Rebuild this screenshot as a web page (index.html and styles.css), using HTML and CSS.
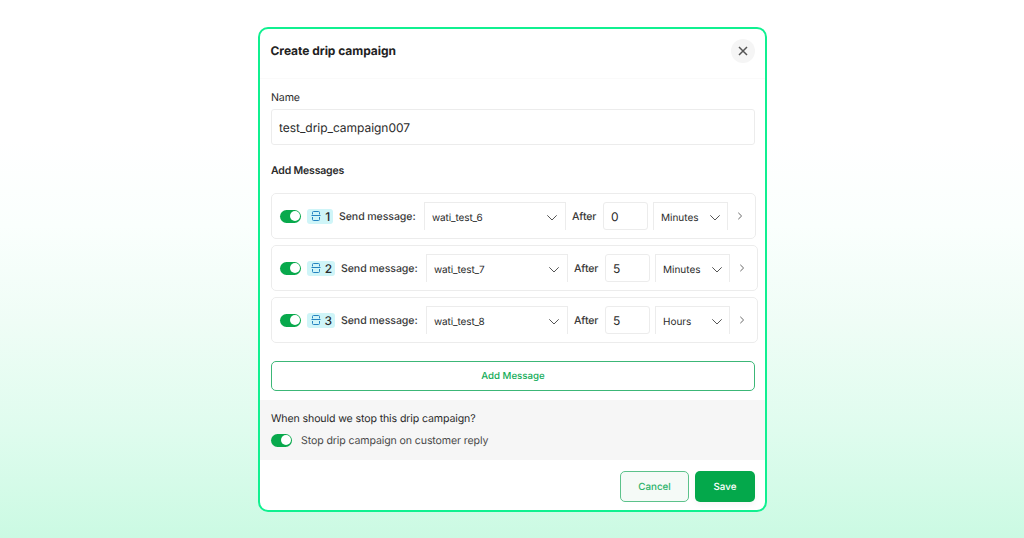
FILE: index.html
```html
<!DOCTYPE html>
<html lang="en">
<head>
  <meta charset="UTF-8">
  <title>Create drip campaign</title>
  <link rel="stylesheet" href="styles.css">
</head>
<body>
  <svg width="0" height="0" class="sprite">
    <symbol id="icon-split" viewBox="0 0 10 10">
      <path d="M1.5 3.4V1.5Q1.5 .5 2.5 .5H7.5Q8.5 .5 8.5 1.5V3.4M.5 4.5H9.5M1.5 6V8.5Q1.5 9.5 2.5 9.5H7.5Q8.5 9.5 8.5 8.5V6" />
    </symbol>
    <symbol id="icon-down" viewBox="0 0 12 8">
      <path d="M1.3 1.3L6 6L10.7 1.3" />
    </symbol>
    <symbol id="icon-next" viewBox="0 0 6 8">
      <path d="M1.3 .8L4.6 4L1.3 7.2" />
    </symbol>
  </svg>

  <div class="modal">
    <div class="modal-header">
      <h2>Create drip campaign</h2>
      <button class="close-btn" aria-label="Close">
        <svg width="10" height="10" viewBox="0 0 10 10"><path d="M1 1L9 9M9 1L1 9" /></svg>
      </button>
    </div>

    <div class="modal-body">
      <label class="name-label" for="campaign-name">Name</label>
      <input class="name-input" id="campaign-name" type="text" value="test_drip_campaign007">

      <h3>Add Messages</h3>
      <div class="messages">
        <div class="message first">
          <span class="switch"></span>
          <span class="badge"><svg><use href="#icon-split" /></svg>1</span>
          <span class="send-label">Send message:</span>
          <div class="select template">wati_test_6<svg><use href="#icon-down" /></svg></div>
          <span class="after-label">After</span>
          <input class="delay" type="text" value="0">
          <div class="select unit">Minutes<svg><use href="#icon-down" /></svg></div>
          <svg class="next"><use href="#icon-next" /></svg>
        </div>
        <div class="message">
          <span class="switch"></span>
          <span class="badge"><svg><use href="#icon-split" /></svg>2</span>
          <span class="send-label">Send message:</span>
          <div class="select template">wati_test_7<svg><use href="#icon-down" /></svg></div>
          <span class="after-label">After</span>
          <input class="delay" type="text" value="5">
          <div class="select unit">Minutes<svg><use href="#icon-down" /></svg></div>
          <svg class="next"><use href="#icon-next" /></svg>
        </div>
        <div class="message">
          <span class="switch"></span>
          <span class="badge"><svg><use href="#icon-split" /></svg>3</span>
          <span class="send-label">Send message:</span>
          <div class="select template">wati_test_8<svg><use href="#icon-down" /></svg></div>
          <span class="after-label">After</span>
          <input class="delay" type="text" value="5">
          <div class="select unit">Hours<svg><use href="#icon-down" /></svg></div>
          <svg class="next"><use href="#icon-next" /></svg>
        </div>
      </div>
      <button class="add-btn">Add Message</button>
    </div>

    <div class="stop-section">
      <p>When should we stop this drip campaign?</p>
      <div class="stop-row">
        <span class="switch"></span>
        <span>Stop drip campaign on customer reply</span>
      </div>
    </div>

    <div class="modal-footer">
      <button class="btn cancel">Cancel</button>
      <button class="btn save">Save</button>
    </div>
  </div>
</body>
</html>
```
FILE: styles.css
```css
* {
  box-sizing: border-box;
}
body {
  margin: 0;
  height: 538px;
  padding-top: 27px;
  overflow: hidden;
  font-family: Inter, "Liberation Sans", sans-serif;
  font-size: 10.6px;
  letter-spacing: -0.12px;
  text-rendering: geometricPrecision;
  color: #2b2b2b;
  background: linear-gradient(#fff 0%, #fff 26%, #fafffd 42%, #effdf6 60%, #dffcee 80%, #cbfae3 100%);
}
input, button {
  font-family: inherit;
  color: inherit;
  text-rendering: inherit;
}
svg {
  fill: none;
  stroke: currentColor;
  flex-shrink: 0;
}
.sprite {
  display: block;
  height: 0;
}
.modal {
  width: 509px;
  height: 485px;
  margin-left: 258px;
  border: 2px solid #10f090;
  border-radius: 10px;
  background: #fff;
  overflow: hidden;
}
.modal-header {
  display: flex;
  align-items: center;
  justify-content: space-between;
  height: 50px;
  padding: 0 10px 6px 10.5px;
  border-bottom: 1px solid #fafafa;
}
h2 {
  margin: 0;
  font-size: 12px;
  font-weight: 700;
  letter-spacing: -0.04px;
  color: #222;
}
.close-btn {
  display: flex;
  align-items: center;
  justify-content: center;
  width: 24px;
  height: 24px;
  padding: 0;
  border: none;
  border-radius: 50%;
  background: #f5f5f5;
  color: #555;
}
.close-btn svg {
  stroke-width: 1.5;
}
.modal-body {
  height: 321px;
  padding: 11px 10px 0 11px;
}
.name-label {
  display: block;
  height: 19px;
  line-height: 15px;
}
.name-input {
  display: block;
  width: 484px;
  height: 36px;
  padding: 0 7px;
  border: 1px solid #ececec;
  border-radius: 3px;
  font-size: 12px;
  letter-spacing: -0.04px;
  background: #fff;
}
h3 {
  margin: 18px 0 15px;
  font-size: 10.5px;
  line-height: 15px;
  font-weight: 600;
  letter-spacing: -0.18px;
}
.messages {
  display: flex;
  flex-direction: column;
  gap: 6px;
  margin-right: -3px;
}
.message {
  display: flex;
  align-items: center;
  width: 487px;
  height: 46px;
  padding-left: 8px;
  border: 1px solid #ececec;
  border-radius: 5px;
}
.message.first {
  width: 485px;
}
.switch {
  display: flex;
  align-items: center;
  justify-content: flex-end;
  width: 21px;
  height: 13px;
  padding-right: 1px;
  border-radius: 7px;
  background: #08a94c;
  flex-shrink: 0;
}
.switch::after {
  content: "";
  width: 10px;
  height: 10px;
  border-radius: 50%;
  background: #fff;
}
.badge {
  display: flex;
  align-items: center;
  justify-content: space-between;
  width: 28px;
  height: 15px;
  margin-left: 6px;
  padding: 0 3px 0 4px;
  border-radius: 3px;
  background: #cff5f8;
  font-size: 12px;
  font-weight: 500;
}
.first .badge {
  width: 26px;
}
.badge svg {
  width: 10px;
  height: 10px;
  color: #2583c0;
}
.send-label {
  flex: 0 0 91px;
  padding-left: 6px;
  font-weight: 500;
  letter-spacing: -0.1px;
  white-space: nowrap;
  color: #3a3a3a;
}
.select {
  display: flex;
  align-items: center;
  justify-content: space-between;
  height: 28px;
  padding-top: 2px;
  border: 1px solid #ececec;
  border-bottom: none;
  font-size: 10px;
  flex-shrink: 0;
}
.select svg {
  width: 12px;
  height: 8px;
  color: #555;
}
.template {
  width: 142px;
  padding-left: 7px;
  padding-right: 7px;
}
.after-label {
  flex: 0 0 37px;
  padding-left: 6px;
  font-weight: 500;
  color: #3a3a3a;
}
.delay {
  width: 45px;
  height: 28px;
  padding: 0 7px;
  border: 1px solid #ececec;
  border-radius: 3px;
  font-size: 12px;
  flex-shrink: 0;
}
.unit {
  width: 75px;
  margin-left: 5px;
  padding-left: 7px;
  padding-right: 6px;
  letter-spacing: 0;
}
.next {
  width: 6px;
  height: 8px;
  margin-left: 9px;
  color: #666;
}
.add-btn {
  display: block;
  width: 484px;
  height: 30px;
  margin-top: 18px;
  padding: 1px 0 0;
  border: 1px solid #3cb777;
  border-radius: 5px;
  background: #fff;
  color: #12ac58;
  font-size: 9.7px;
  font-weight: 500;
}
.stop-section {
  height: 60px;
  padding: 11px 11px 0;
  background: #f6f6f6;
}
.stop-section p {
  margin: 0 0 7px;
  line-height: 15px;
}
.stop-row {
  display: flex;
  align-items: center;
  gap: 9px;
  height: 14px;
  color: #4a4a4a;
}
.modal-footer {
  display: flex;
  justify-content: flex-end;
  gap: 6px;
  padding: 11px 10px 0;
}
.btn {
  height: 31px;
  padding: 1px 0 0;
  border-radius: 5px;
  font-size: 9.8px;
  font-weight: 500;
}
.cancel {
  width: 69px;
  border: 1px solid #5cc28b;
  background: #f5faf7;
  color: #2cb26a;
}
.save {
  width: 60px;
  border: none;
  background: #04a84b;
  color: #fff;
  box-shadow: 0 3px 6px rgba(0, 0, 0, 0.04);
}
```
